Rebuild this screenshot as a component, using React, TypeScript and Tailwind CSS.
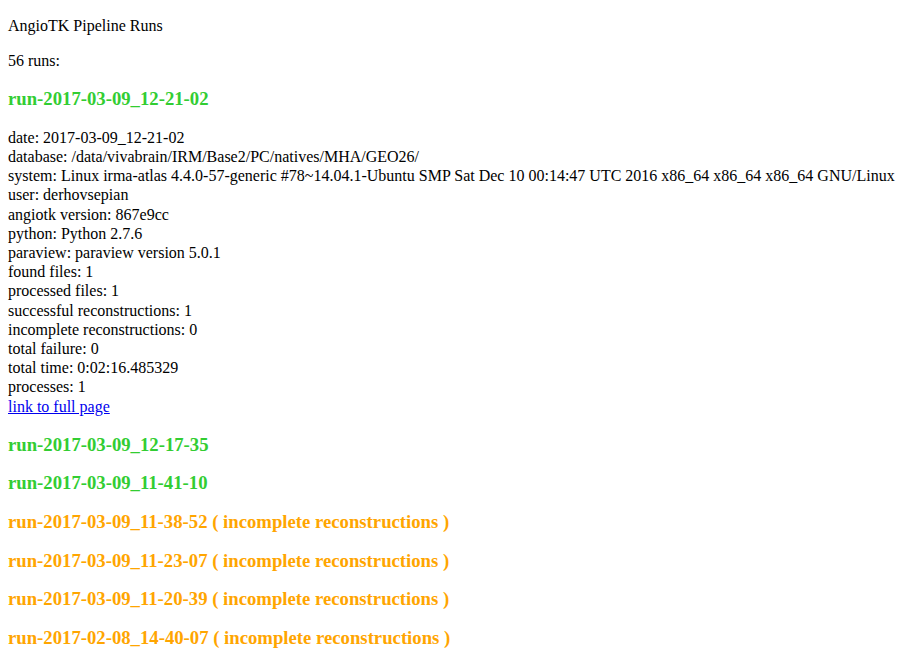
const details: [string, string][] = [
  ['date', '2017-03-09_12-21-02'],
  ['database', '/data/vivabrain/IRM/Base2/PC/natives/MHA/GEO26/'],
  ['system', 'Linux irma-atlas 4.4.0-57-generic #78~14.04.1-Ubuntu SMP Sat Dec 10 00:14:47 UTC 2016 x86_64 x86_64 x86_64 GNU/Linux'],
  ['user', 'derhovsepian'],
  ['angiotk version', '867e9cc'],
  ['python', 'Python 2.7.6'],
  ['paraview', 'paraview version 5.0.1'],
  ['found files', '1'],
  ['processed files', '1'],
  ['successful reconstructions', '1'],
  ['incomplete reconstructions', '0'],
  ['total failure', '0'],
  ['total time', '0:02:16.485329'],
  ['processes', '1'],
];

const runs: { name: string; incomplete?: boolean }[] = [
  { name: 'run-2017-03-09_12-17-35' },
  { name: 'run-2017-03-09_11-41-10' },
  { name: 'run-2017-03-09_11-38-52', incomplete: true },
  { name: 'run-2017-03-09_11-23-07', incomplete: true },
  { name: 'run-2017-03-09_11-20-39', incomplete: true },
  { name: 'run-2017-02-08_14-40-07', incomplete: true },
];

function RunHeading({ name, incomplete }: { name: string; incomplete?: boolean }) {
  return (
    <h3
      className={`text-[18.72px] font-bold leading-[20px] my-[18.72px] ${
        incomplete ? 'text-[#ffa500]' : 'text-[#32cd32]'
      }`}
    >
      {name}
      {incomplete && ' ( incomplete reconstructions )'}
    </h3>
  );
}

export default function App() {
  return (
    <div
      className="min-h-screen bg-white text-black text-[16px] leading-[19.2px] px-2 py-px"
      style={{ fontFamily: '"Liberation Serif", "Times New Roman", serif' }}
    >
      <p className="my-[15px]">AngioTK Pipeline Runs</p>
      <p className="my-4">56 runs:</p>
      <RunHeading name="run-2017-03-09_12-21-02" />
      <div className="mt-[15px] mb-4">
        {details.map(([k, v]) => (
          <div key={k} className="whitespace-nowrap">
            {k}: {v}
          </div>
        ))}
        <a href="#" className="text-[#0000ee] underline">
          link to full page
        </a>
      </div>
      {runs.map((r) => (
        <RunHeading key={r.name} name={r.name} incomplete={r.incomplete} />
      ))}
    </div>
  );
}
